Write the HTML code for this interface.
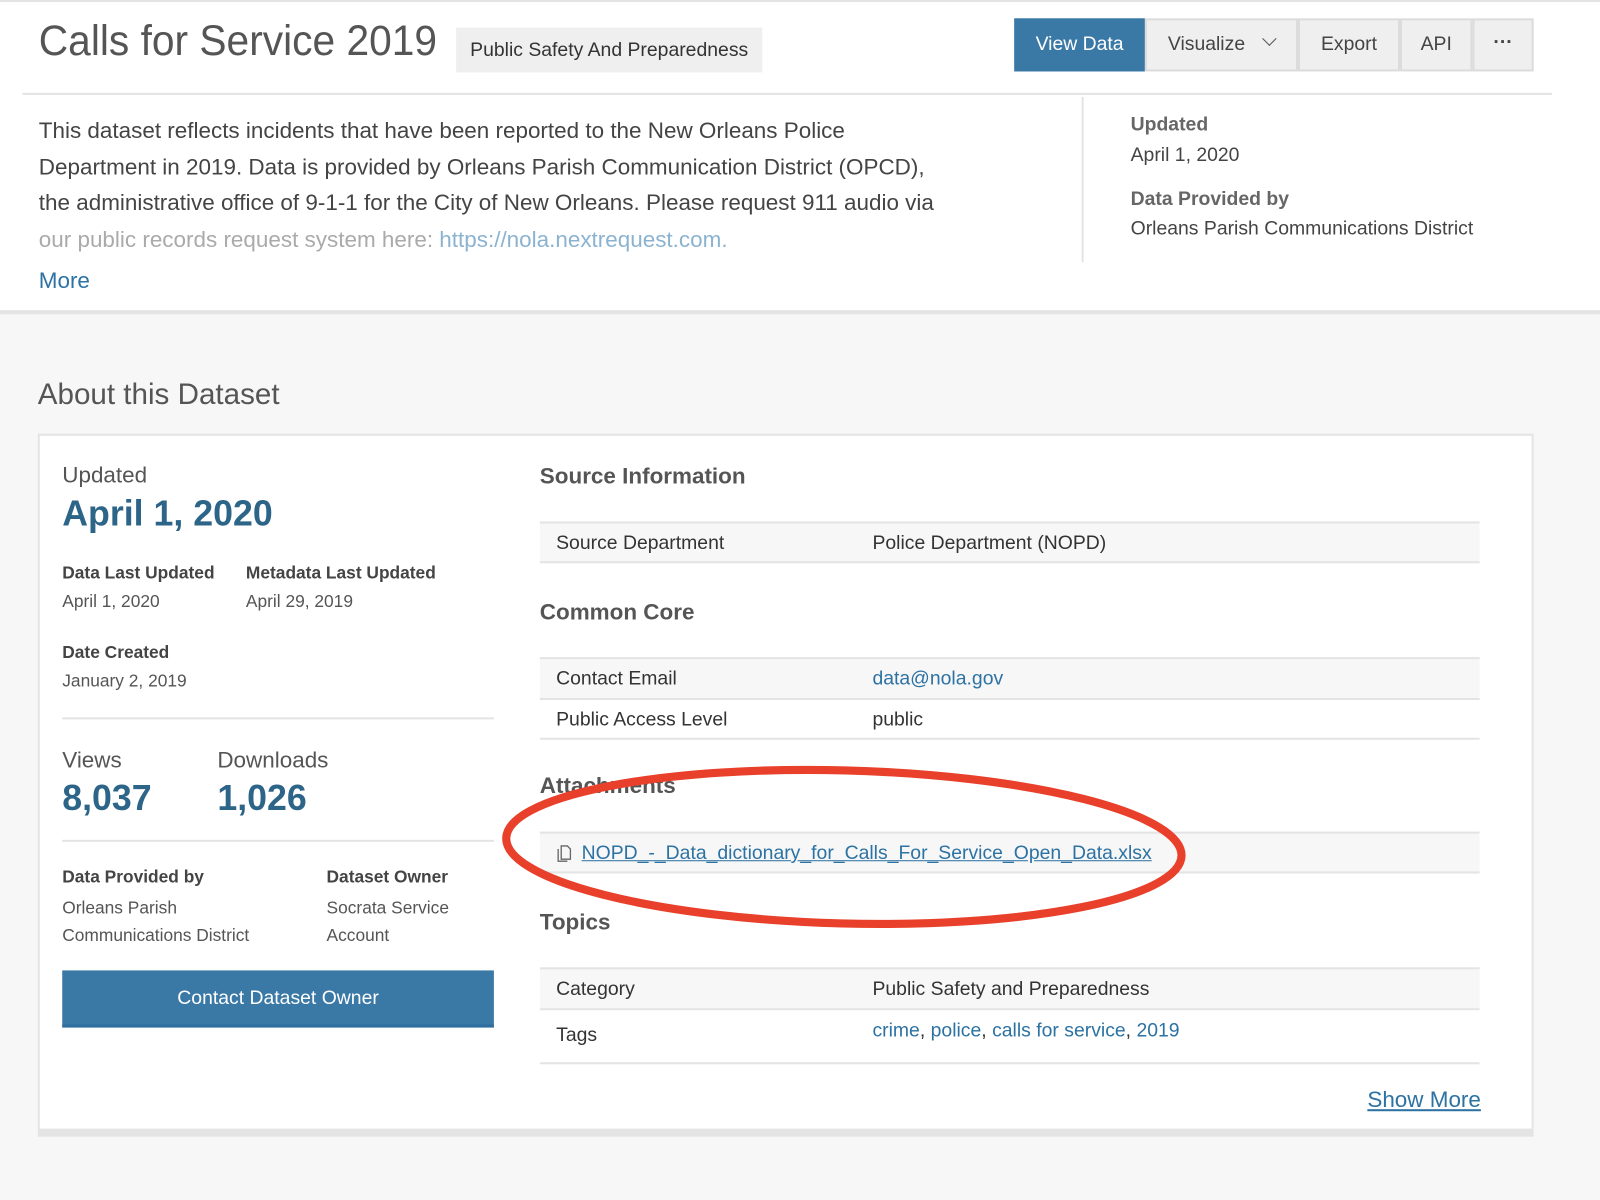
<!DOCTYPE html>
<html><head><meta charset="utf-8"><style>
html,body{margin:0;padding:0;width:1600px;height:1200px;overflow:hidden;background:#f7f7f7}
#w{position:absolute;left:0;top:0;width:1568px;height:1176px;transform:scale(1.020408);transform-origin:0 0;font-family:"Liberation Sans","DejaVu Sans",sans-serif;color:#444}
.a{position:absolute;white-space:nowrap}
.top{position:absolute;left:0;top:0;width:1568px;height:304px;background:#fff;border-top:2px solid #e4e4e4;box-sizing:border-box}
.btn{position:absolute;top:16px;height:52px;background:#efefef;border:2px solid #dcdcdc;box-sizing:border-box;font-size:19px;color:#444;line-height:48px;text-align:center}
.line{position:absolute;background:#e4e4e4}
.lbl{font-size:17px;font-weight:bold;color:#444}
.val{font-size:17px;color:#555}
.blue{color:#2d6589;font-weight:bold}
.row{position:absolute;left:529px;width:921px;border-top:2px solid #e4e4e4;box-sizing:border-box;font-size:19px;color:#333}
.lnk{color:#2c72a3}
</style></head><body><div id="w">
<div class="top">
<div class="a" style="left:38px;top:14px;font-size:42px;color:#555;transform:scaleX(0.95);transform-origin:0 0">Calls for Service 2019</div>
<div class="a" style="left:447px;top:25px;width:300px;height:44px;background:#efefef;font-size:19px;line-height:46px;text-align:center;color:#333">Public Safety And Preparedness</div>
<div class="btn" style="left:994px;width:128px;background:#3a78a6;border-color:#3a78a6;color:#fff">View Data</div>
<div class="btn" style="left:1122px;width:150px">Visualize <span style="display:inline-block;width:9px;height:9px;border-right:1.5px solid #555;border-bottom:1.5px solid #555;transform:rotate(45deg);margin:0 0 6px 14px"></span></div>
<div class="btn" style="left:1272px;width:100px">Export</div>
<div class="btn" style="left:1372px;width:71px">API</div>
<div class="btn" style="left:1443px;width:60px;font-weight:bold;line-height:44px">···</div>
<div class="line" style="left:22px;top:89px;width:1499px;height:2px"></div>
<div class="line" style="left:1060px;top:93px;width:2px;height:162px"></div>
<div class="a" style="left:38px;top:108px;font-size:22px;line-height:35.5px;color:#444">This dataset reflects incidents that have been reported to the New Orleans Police<br>Department in 2019. Data is provided by Orleans Parish Communication District (OPCD),<br>the administrative office of 9-1-1 for the City of New Orleans. Please request 911 audio via<br><span style="color:#aaa">our public records request system here: <span style="color:#8bb3d0">https://nola.nextrequest.com.</span></span></div>
<div class="a" style="left:38px;top:260px;font-size:22px;color:#2c72a3">More</div>
<div class="a" style="left:1108px;top:110px;font-size:19px;font-weight:bold;color:#666">Updated</div>
<div class="a" style="left:1108px;top:140px;font-size:19px;color:#444">April 1, 2020</div>
<div class="a" style="left:1108px;top:183px;font-size:19px;font-weight:bold;color:#666">Data Provided by</div>
<div class="a" style="left:1108px;top:212px;font-size:19px;color:#444">Orleans Parish Communications District</div>
</div>
<div class="line" style="left:0;top:304px;width:1568px;height:4px"></div>
<div class="a" style="left:37px;top:371px;font-size:29px;color:#555">About this Dataset</div>
<div style="position:absolute;left:37px;top:425px;width:1466px;height:689px;background:#fff;border:2px solid #e4e4e4;border-bottom-width:8px;box-sizing:border-box"></div>
<div class="a" style="left:61px;top:453px;font-size:22px;color:#555">Updated</div>
<div class="a blue" style="left:61px;top:484px;font-size:35px">April 1, 2020</div>
<div class="a lbl" style="left:61px;top:552px">Data Last Updated</div>
<div class="a val" style="left:61px;top:580px">April 1, 2020</div>
<div class="a lbl" style="left:241px;top:552px">Metadata Last Updated</div>
<div class="a val" style="left:241px;top:580px">April 29, 2019</div>
<div class="a lbl" style="left:61px;top:630px">Date Created</div>
<div class="a val" style="left:61px;top:658px">January 2, 2019</div>
<div class="line" style="left:61px;top:703px;width:423px;height:2px"></div>
<div class="a" style="left:61px;top:732px;font-size:22px;color:#555">Views</div>
<div class="a blue" style="left:61px;top:763px;font-size:35px">8,037</div>
<div class="a" style="left:213px;top:732px;font-size:22px;color:#555">Downloads</div>
<div class="a blue" style="left:213px;top:763px;font-size:35px">1,026</div>
<div class="line" style="left:61px;top:823px;width:423px;height:2px"></div>
<div class="a lbl" style="left:61px;top:850px">Data Provided by</div>
<div class="a val" style="left:61px;top:876px;line-height:27px">Orleans Parish<br>Communications District</div>
<div class="a lbl" style="left:320px;top:850px">Dataset Owner</div>
<div class="a val" style="left:320px;top:876px;line-height:27px">Socrata Service<br>Account</div>
<div class="a" style="left:61px;top:951px;width:423px;height:56px;background:#3a78a6;border-bottom:3px solid #2f6e9e;box-sizing:border-box;color:#fff;font-size:19px;line-height:56px;text-align:center">Contact Dataset Owner</div>
<div class="a" style="left:529px;top:454px;font-size:22px;font-weight:bold;color:#555">Source Information</div>
<div class="row" style="top:511px;height:41px;background:#f7f7f7;border-bottom:2px solid #e4e4e4"><span class="a" style="left:16px;top:9px">Source Department</span><span class="a" style="left:326px;top:9px">Police Department (NOPD)</span></div>
<div class="a" style="left:529px;top:587px;font-size:22px;font-weight:bold;color:#555">Common Core</div>
<div class="row" style="top:644px;height:41px;background:#f7f7f7"><span class="a" style="left:16px;top:9px">Contact Email</span><span class="a lnk" style="left:326px;top:9px">data@nola.gov</span></div>
<div class="row" style="top:684px;height:41px;border-bottom:2px solid #e4e4e4"><span class="a" style="left:16px;top:9px">Public Access Level</span><span class="a" style="left:326px;top:9px">public</span></div>
<div class="a" style="left:529px;top:757px;font-size:22px;font-weight:bold;color:#555">Attachments</div>
<div class="row" style="top:815px;height:41px;background:#f7f7f7;border-bottom:2px solid #e4e4e4"><svg class="a" style="left:17px;top:11px" width="14" height="17" viewBox="0 0 14 17"><path d="M4 1h6l3 3v10H4z M1 4v12h9" fill="none" stroke="#666" stroke-width="1.3"/></svg><span class="a lnk" style="left:41px;top:9px;text-decoration:underline">NOPD_-_Data_dictionary_for_Calls_For_Service_Open_Data.xlsx</span></div>
<div class="a" style="left:529px;top:891px;font-size:22px;font-weight:bold;color:#555">Topics</div>
<div class="row" style="top:948px;height:41px;background:#f7f7f7"><span class="a" style="left:16px;top:9px">Category</span><span class="a" style="left:326px;top:9px">Public Safety and Preparedness</span></div>
<div class="row" style="top:988px;height:55px;border-bottom:2px solid #e4e4e4"><span class="a" style="left:16px;top:14px">Tags</span><span class="a" style="left:326px;top:10px"><span class="lnk">crime</span>, <span class="lnk">police</span>, <span class="lnk">calls for service</span>, <span class="lnk">2019</span></span></div>
<div class="a" style="left:1340px;top:1065px;font-size:22px;color:#2c72a3;text-decoration:underline">Show More</div>
<svg style="position:absolute;left:0;top:0" width="1568" height="1176"><ellipse cx="827" cy="830" rx="331" ry="75" fill="none" stroke="#e8402a" stroke-width="8" transform="rotate(1.5 827 830)"/></svg>
</div></body></html>
